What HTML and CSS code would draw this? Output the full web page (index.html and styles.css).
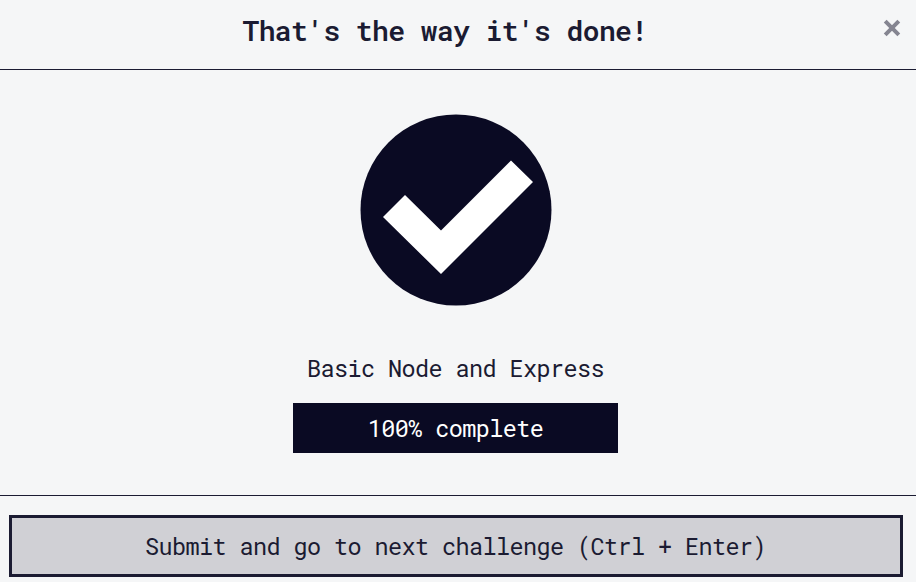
FILE: index.html
```html
<!DOCTYPE html>
<html lang="en">
<head>
<meta charset="utf-8">
<title>Challenge complete</title>
<link rel="stylesheet" href="styles.css">
</head>
<body>
<div class="modal">
  <header class="modal-header">
    <h1 class="title">That's the way it's done!</h1>
    <button class="close" aria-label="Close"><svg width="18" height="18" viewBox="0 0 18 18"><path d="M2.2 2.2 15.8 15.8M15.8 2.2 2.2 15.8"/></svg></button>
  </header>
  <main class="modal-body">
    <svg class="check" width="192" height="192" viewBox="0 0 192 192"><circle cx="96" cy="96" r="95.5"/><path d="M23 103 45 81 81 116.5 151 46.5 173 68 81 160Z"/></svg>
    <p class="block-name">Basic Node and Express</p>
    <div class="progress">100% complete</div>
  </main>
  <footer class="modal-footer">
    <button class="submit">Submit and go to next challenge (Ctrl + Enter)</button>
  </footer>
</div>
</body>
</html>
```
FILE: styles.css
```css
* { box-sizing: border-box; }
body { margin: 0; background: #f5f6f7; color: #1b1b32; font-family: "Roboto Mono", "DejaVu Sans Mono", monospace; }
.modal { display: flex; flex-direction: column; height: 582px; overflow: hidden; }
.modal-header { display: flex; height: 70px; padding: 0 15px 0 0; border-bottom: 1px solid #1b1b32; }
.title { flex: 1; margin: 0; padding-left: 7px; text-align: center; font-size: 28px; letter-spacing: -0.6px; line-height: 62px; font-weight: 600; }
.close { width: 18px; height: 18px; padding: 0; margin-top: 19px; border: 0; background: none; }
.close svg { display: block; stroke: #858591; stroke-width: 4; }
.modal-body { display: flex; flex-direction: column; align-items: center; height: 426px; padding: 44px 5px 0 0; border-bottom: 1px solid #1b1b32; }
.check { fill: #0a0a23; flex: none; }
.check path { fill: #fff; }
.block-name { margin: 46px 0 0; font-size: 23.5px; letter-spacing: -0.6px; line-height: 32px; font-weight: 370; }
.progress { width: 325px; height: 50px; margin-top: 19px; background: #0a0a23; color: #fff; text-align: center; font-size: 23.5px; letter-spacing: -0.6px; line-height: 50px; }
.modal-footer { padding: 19px 13px 0 9px; }
.submit { display: block; width: 100%; height: 62px; padding: 0 1px 2px 0; border: 3px solid #1b1b32; background: #d0d0d5; color: #1b1b32; font: 370 23.5px "Roboto Mono", "DejaVu Sans Mono", monospace; letter-spacing: -0.6px; }
```
